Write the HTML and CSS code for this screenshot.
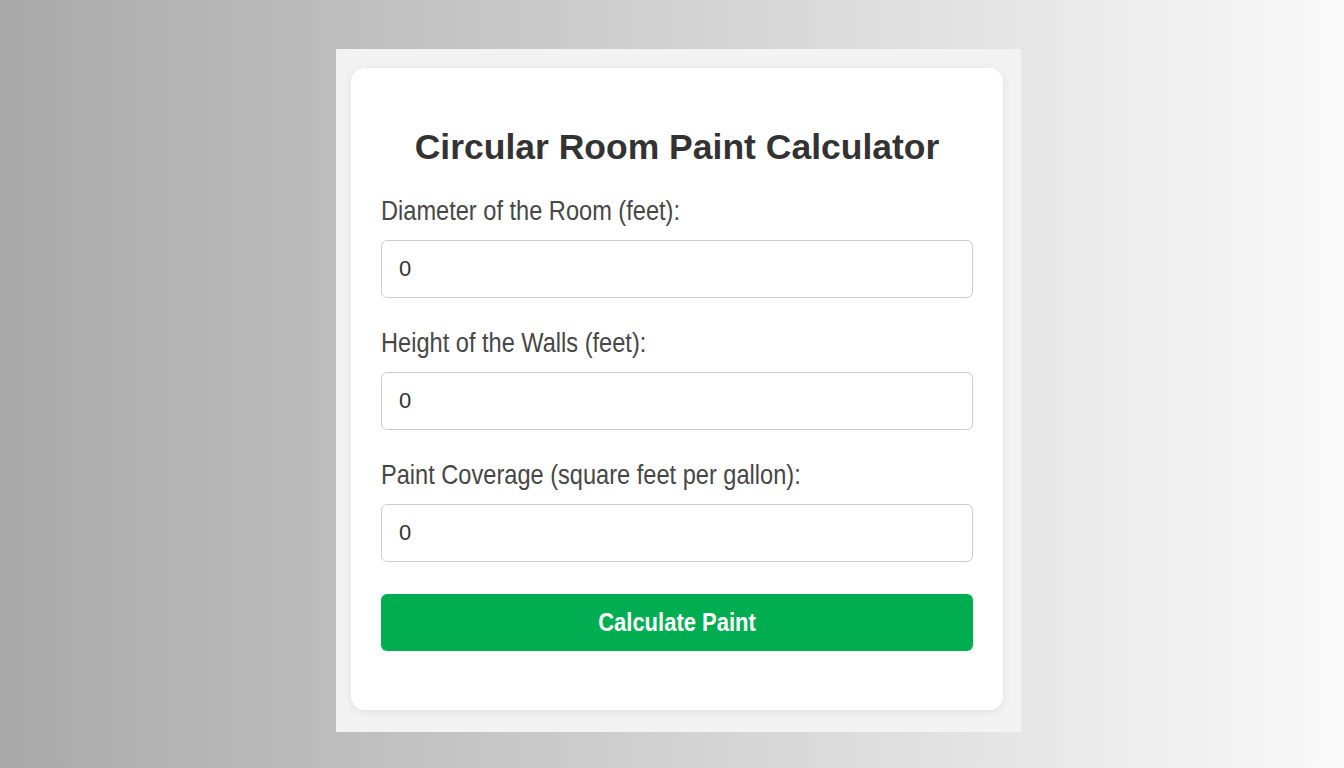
FILE: index.html
```html
<!DOCTYPE html>
<html lang="en">
<head>
<meta charset="utf-8">
<title>Circular Room Paint Calculator</title>
<link rel="stylesheet" href="styles.css">
</head>
<body>
  <div class="frame">
    <div class="card">
      <h1 class="title">Circular Room Paint Calculator</h1>
      <div class="field">
        <label class="label" for="diameter"><span class="tall">Diameter of the Room (feet):</span></label>
        <input class="input" id="diameter" type="text" value="0">
      </div>
      <div class="field">
        <label class="label" for="height"><span class="tall">Height of the Walls (feet):</span></label>
        <input class="input" id="height" type="text" value="0">
      </div>
      <div class="field">
        <label class="label" for="coverage"><span class="tall">Paint Coverage (square feet per gallon):</span></label>
        <input class="input" id="coverage" type="text" value="0">
      </div>
      <button class="btn" type="button"><span class="tall">Calculate Paint</span></button>
    </div>
  </div>
</body>
</html>
```
FILE: styles.css
```css
html, body {
  margin: 0;
  height: 100%;
}
body {
  background: linear-gradient(to right, #a9a9a9 0%, #fafafa 100%);
  font-family: "Liberation Sans", Arial, sans-serif;
  display: flex;
  align-items: flex-start;
  padding: 49px 0 0 336px;
  box-sizing: border-box;
}
.frame {
  width: 685px;
  height: 683px;
  box-sizing: border-box;
  background: #f3f3f3;
  padding: 19px 18px 22px 15px;
}
.card {
  background: #ffffff;
  border-radius: 14px;
  box-shadow: 0 2px 10px rgba(0, 0, 0, 0.08);
  padding: 30px;
  height: 642px;
  box-sizing: border-box;
  display: flex;
  flex-direction: column;
}
.title {
  margin: 29px 0 31px;
  text-align: center;
  font-size: 35.5px;
  line-height: 40px;
  font-weight: bold;
  color: #333333;
}
.field {
  display: flex;
  flex-direction: column;
  margin-bottom: 32px;
}
.label {
  font-size: 23.6px;
  line-height: 27px;
  color: #474747;
  margin-bottom: 15px;
}
.tall {
  display: inline-block;
  transform: scaleY(1.14);
  transform-origin: 50% 55%;
}
.input {
  height: 58px;
  box-sizing: border-box;
  border: 1px solid #cccccc;
  border-radius: 6px;
  padding: 0 17px;
  font-family: "Liberation Sans", Arial, sans-serif;
  font-size: 22px;
  color: #333333;
  background: #ffffff;
  outline: none;
}
.btn {
  height: 57px;
  border: none;
  border-radius: 6px;
  background: #00ae52;
  color: #ffffff;
  font-family: "Liberation Sans", Arial, sans-serif;
  font-size: 22px;
  font-weight: bold;
  cursor: pointer;
}
```
